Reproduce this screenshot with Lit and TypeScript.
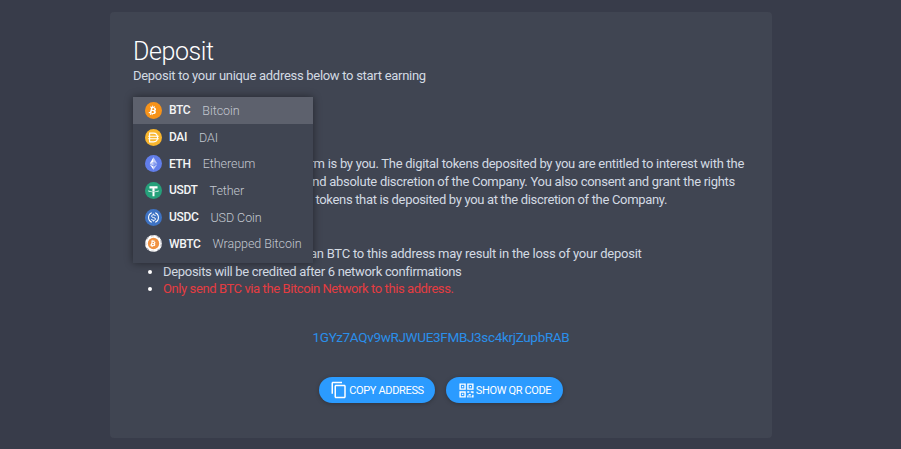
import { LitElement, html, css, svg } from "lit";
import { customElement } from "lit/decorators.js";

const BTC_B = "M15.6 10.6c.2-1.5-.9-2.2-2.4-2.8l.5-2-1.2-.3-.5 1.9-1-.2.5-1.9-1.2-.3-.5 2-.8-.2-1.7-.4-.3 1.3s.9.2.9.2c.5.1.6.4.6.7l-.6 2.2-.8 3.1c-.1.2-.2.4-.6.3 0 0-.9-.2-.9-.2l-.6 1.4 1.6.4.9.2-.5 2 1.2.3.5-2 1 .2-.5 2 1.2.3.5-2c2.1.4 3.6.2 4.3-1.6.5-1.5 0-2.3-1.1-2.9.8-.2 1.4-.7 1.5-1.8zm-2.8 3.9c-.4 1.5-2.9.7-3.7.5l.7-2.7c.8.2 3.4.6 3 2.2zm.4-4c-.3 1.3-2.4.7-3.1.5l.6-2.4c.7.2 2.9.5 2.5 1.9z";

const icons: Record<string, unknown> = {
  BTC: svg`<circle cx="12" cy="12" r="12" fill="#f7931a"/><path d="${BTC_B}" fill="#fff"/>`,
  DAI: svg`<circle cx="12" cy="12" r="12" fill="#f9b62e"/><path d="M6.500 5.800h5.600c3.400 0 5.400 2.400 5.600 6.200-.2 3.800-2.200 6.200-5.600 6.200H6.500z" fill="none" stroke="#fff" stroke-width="1.600"/><path d="M4.500 10.200h15M4.500 13.800h15" stroke="#fff" stroke-width="1.500"/>`,
  ETH: svg`<circle cx="12" cy="12" r="12" fill="#627eea"/><path d="M12 3.200v6.600l5.500 2.400z" fill="#fff" fill-opacity=".6"/><path d="M12 3.200 6.500 12.200 12 9.800z" fill="#fff"/><path d="M12 16.200v4.600l5.500-7.600z" fill="#fff" fill-opacity=".6"/><path d="M12 20.800v-4.600l-5.500-3z" fill="#fff"/><path d="M12 15.100l5.500-2.900L12 9.800z" fill="#fff" fill-opacity=".25"/><path d="M6.500 12.200l5.500 2.900V9.800z" fill="#fff" fill-opacity=".6"/>`,
  USDT: svg`<circle cx="12" cy="12" r="12" fill="#26a17b"/><path d="M13.400 10.900V9h4.300V6.100H6.300V9h4.300v1.900c-3.500.2-6.100.9-6.100 1.700s2.600 1.500 6.100 1.700v5.900h2.800v-5.900c3.500-.2 6.100-.9 6.100-1.700s-2.600-1.500-6.100-1.700zm-1.400 2.700c-3.600 0-6.500-.5-6.500-1.100 0-.5 2-1 4.900-1.100v1.800c.5 0 1 .1 1.600.1s1.100 0 1.600-.1v-1.800c2.900.1 4.900.6 4.900 1.100 0 .6-2.900 1.100-6.500 1.100z" fill="#fff"/>`,
  USDC: svg`<circle cx="12" cy="12" r="12" fill="#3e73c4"/><path d="M9.600 5.300a7.200 7.200 0 0 0 0 13.400M14.400 5.300a7.200 7.200 0 0 1 0 13.400" fill="none" stroke="#fff" stroke-width="1.500"/><path d="M14.700 9.800c-.3-1.100-1.300-1.700-2.700-1.700-1.500 0-2.700.8-2.700 2 0 2.900 5.500 1.100 5.500 4 0 1.200-1.200 2-2.800 2-1.500 0-2.600-.7-2.900-1.900M12 6.600v1.500M12 16.100v1.500" fill="none" stroke="#fff" stroke-width="1.400"/>`,
  WBTC: svg`<circle cx="12" cy="12" r="12" fill="#fff"/><circle cx="12" cy="12" r="11" fill="none" stroke="#8a8690" stroke-width="1" stroke-dasharray="4 4"/><circle cx="12" cy="12" r="8" fill="#f09242"/><g transform="translate(3 3) scale(.75)"><path d="${BTC_B}" fill="#fff"/></g>`,
};

const coins = [
  { s: "BTC", n: "Bitcoin" },
  { s: "DAI", n: "DAI" },
  { s: "ETH", n: "Ethereum" },
  { s: "USDT", n: "Tether" },
  { s: "USDC", n: "USD Coin" },
  { s: "WBTC", n: "Wrapped Bitcoin" },
];

@customElement("app-root")
export class AppRoot extends LitElement {
  static styles = css`
    :host {
      display: block;
      height: 449px;
      overflow: hidden;
      background: #383c4a;
      font-family: Roboto, "Liberation Sans", sans-serif;
      color: #d3dae3;
      box-sizing: border-box;
      padding: 12px 129px 11px 110px;
    }
    .card {
      position: relative;
      height: 426px;
      box-sizing: border-box;
      background: #404552;
      border-radius: 4px;
      padding: 24px 23px 0;
      display: flex;
      flex-direction: column;
    }
    h1 {
      margin: 0;
      font-size: 25px;
      line-height: 32px;
      font-weight: 300;
      color: #fff;
      letter-spacing: -0.4px;
    }
    .sub {
      font-size: 13px;
      line-height: 18px;
      margin-top: -1px;
      color: #d3dae3;
      letter-spacing: -0.29px;
    }
    .para {
      margin-top: 70px;
      display: flex;
      flex-direction: column;
      align-items: flex-end;
      font-size: 13px;
      line-height: 18px;
      letter-spacing: -0.28px;
      color: #d3dae3;
    }
    .para span { white-space: nowrap; padding-right: 5px; }
    .para .l2 { padding-right: 14px; }
    .para .l3 { padding-right: 82px; letter-spacing: -0.33px; }
    ul {
      margin: 36px 0 0;
      padding: 0 0 0 30px;
      font-size: 13px;
      line-height: 17.500px;
      letter-spacing: -0.23px;
    }
    li::marker { color: #fff; }
    .second { letter-spacing: -0.31px; }
    .red { color: #e53c41; letter-spacing: -0.41px; }
    .addr {
      margin-top: 29px;
      text-align: center;
      font-size: 13.500px;
      line-height: 20px;
      letter-spacing: -0.33px;
      color: #2a8fea;
    }
    .btns {
      margin-top: 30px;
      display: flex;
      justify-content: center;
      gap: 11px;
    }
    button {
      height: 26px;
      width: 116px;
      border: 0;
      border-radius: 13px;
      background: #2b9bff;
      color: #fff;
      font: inherit;
      font-size: 11px;
      letter-spacing: -0.35px;
      padding: 1px 0 0;
      display: flex;
      align-items: center;
      justify-content: center;
      gap: 1px;
      box-shadow: 0 1px 4px rgba(0, 0, 0, 0.25);
    }
    button + button { width: 117px; }
    button svg { display: block; flex: none; }
    .menu {
      position: absolute;
      left: 23px;
      top: 85px;
      width: 180px;
      height: 166px;
      background: #404552;
      box-shadow: 0 0 8px rgba(0, 0, 0, 0.45);
    }
    .row {
      height: 26.700px;
      display: flex;
      align-items: center;
      padding-left: 12px;
      font-size: 12.500px;
      white-space: nowrap;
    }
    .row.on { background: #5d616d; }
    .row svg { width: 17px; height: 17px; flex: none; margin-right: 7px; }
    .row b { font-size: 12px; font-weight: 500; color: #f4f5f6; margin-right: 12px; letter-spacing: -0.35px; }
    .row i { font-style: normal; color: #c3c8d0; font-weight: 300; letter-spacing: -0.05px; }
  `;

  render() {
    return html`
      <div class="card">
        <h1>Deposit</h1>
        <div class="sub">Deposit to your unique address below to start earning</div>
        <div class="para">
          <span>The decision to use this platform is by you. The digital tokens deposited by you are entitled to interest with the</span>
          <span class="l2">rates determined at the sole and absolute discretion of the Company. You also consent and grant the rights</span>
          <span class="l3">the Company to use the digital tokens that is deposited by you at the discretion of the Company.</span>
        </div>
        <ul>
          <li>Sending any coins other than BTC to this address may result in the loss of your deposit</li>
          <li class="second">Deposits will be credited after 6 network confirmations</li>
          <li class="red">Only send BTC via the Bitcoin Network to this address.</li>
        </ul>
        <div class="addr">1GYz7AQv9wRJWUE3FMBJ3sc4krjZupbRAB</div>
        <div class="btns">
          <button>
            <svg width="18" height="18" viewBox="0 0 24 24" fill="#fff"><path d="M16 1H4c-1.100 0-2 .9-2 2v14h2V3h12V1zm3 4H8c-1.100 0-2 .9-2 2v14c0 1.100.9 2 2 2h11c1.100 0 2-.9 2-2V7c0-1.100-.9-2-2-2zm0 16H8V7h11v14z"/></svg>
            COPY ADDRESS
          </button>
          <button>
            <svg width="17" height="17" viewBox="0 0 24 24" fill="#fff"><path d="M2 2h9v9H2zm2 2v5h5V4zm1.500 1.500h2v2h-2zM13 2h9v9h-9zm2 2v5h5V4zm1.500 1.500h2v2h-2zM2 13h9v9H2zm2 2v5h5v-5zm1.500 1.500h2v2h-2zM13 13h3v2h-3zm5 0h4v3h-2v-1h-2zm-3 4h3v2h-3zm5 1h2v4h-3v-2h1zM13 19h2v3h-2zm3 1h2v2h-2z"/></svg>
            SHOW QR CODE
          </button>
        </div>
        <div class="menu">
          ${coins.map(
            (c, i) => html`<div class="row ${i === 0 ? "on" : ""}">
              <svg viewBox="0 0 24 24">${icons[c.s]}</svg><b>${c.s}</b><i>${c.n}</i>
            </div>`
          )}
        </div>
      </div>
    `;
  }
}
